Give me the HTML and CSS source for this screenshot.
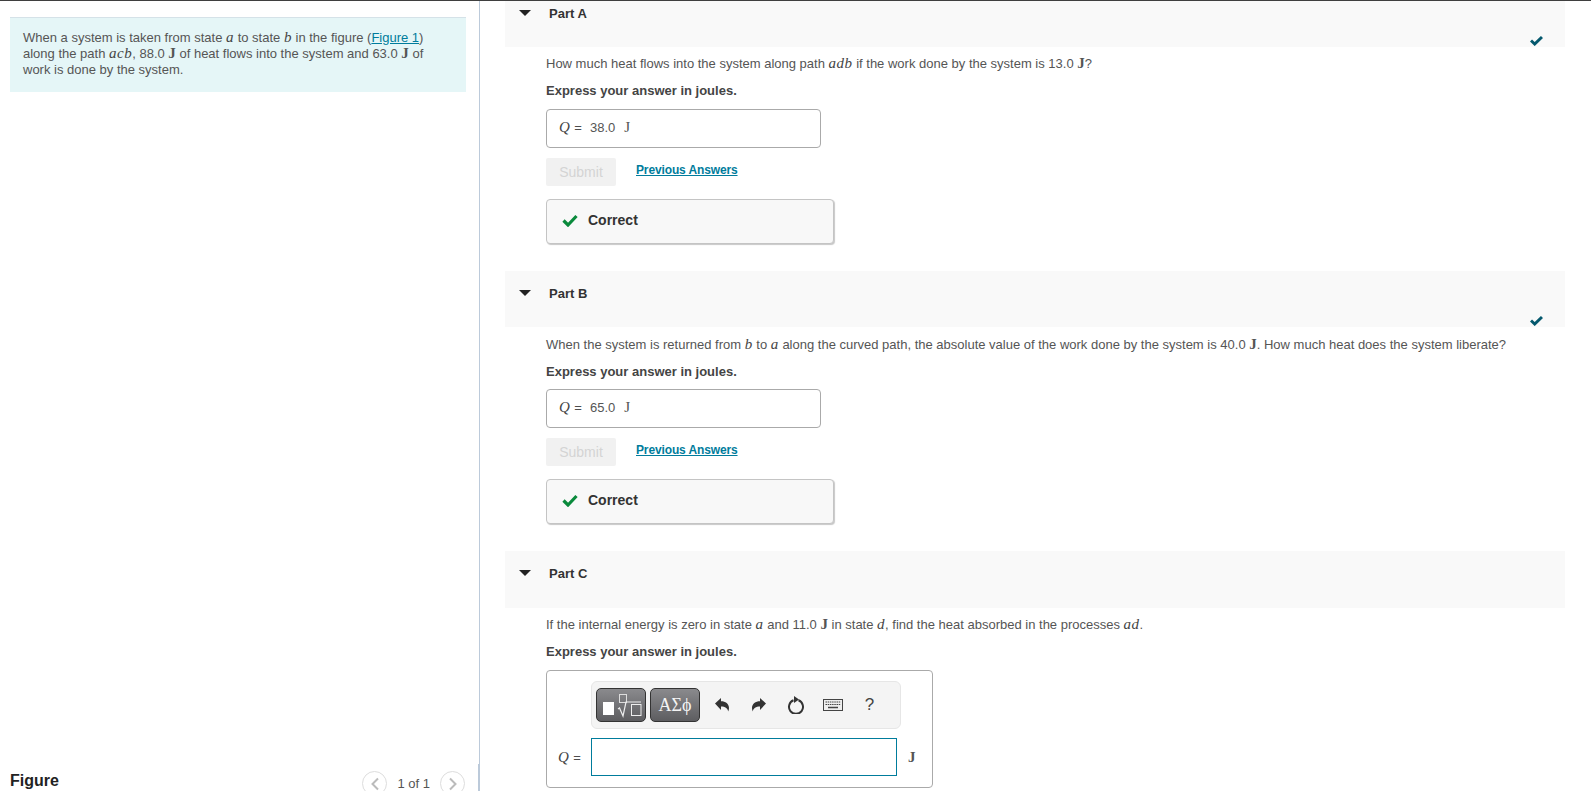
FILE: index.html
```html
<!DOCTYPE html>
<html lang="en">
<head>
<meta charset="utf-8">
<title>Part C</title>
<link rel="stylesheet" href="styles.css">
</head>
<body>
<div class="page">
  <aside class="left">
    <div class="intro">When a system is taken from state <i class="m">a</i> to state <i class="m">b</i> in the figure (<a href="#">Figure 1</a>) along the path <i class="m">acb</i>, 88.0 <span class="u">J</span> of heat flows into the system and 63.0 <span class="u">J</span> of work is done by the system.</div>
    <div class="figbar">
      <strong class="figtitle">Figure</strong>
      <div class="pager">
        <span class="circle"><svg width="10" height="14" viewBox="0 0 10 14"><path d="M8 1.500 2.500 7 8 12.500" fill="none" stroke="#bbb" stroke-width="2"/></svg></span>
        <span class="count">1 of 1</span>
        <span class="circle"><svg width="10" height="14" viewBox="0 0 10 14"><path d="M2 1.500 7.500 7 2 12.500" fill="none" stroke="#bbb" stroke-width="2"/></svg></span>
      </div>
    </div>
  </aside>
  <main class="right">
    <section class="part part-a">
      <header class="head head-a">
        <span class="caret"></span><span class="title">Part A</span>
        <svg class="done" width="13" height="11" viewBox="0 0 13 11"><path d="M1 5.500 4.700 9 12 2" fill="none" stroke="#05596e" stroke-width="3"/></svg>
      </header>
      <div class="body">
        <p class="q">How much heat flows into the system along path <i class="m">adb</i> if the work done by the system is 13.0 <span class="u">J</span>?</p>
        <p class="ex">Express your answer in joules.</p>
        <div class="answer"><i class="m q-var">Q</i><span class="eq">=</span><span class="val">38.0</span><span class="u ans-u">J</span></div>
        <div class="actions"><span class="submit">Submit</span><a class="prev" href="#">Previous Answers</a></div>
        <div class="correct"><svg width="16" height="13" viewBox="0 0 16 13"><path d="M1.500 6.500 6 11 14.500 2" fill="none" stroke="#0a8a3c" stroke-width="3.200"/></svg><span>Correct</span></div>
      </div>
    </section>
    <section class="part part-b">
      <header class="head">
        <span class="caret"></span><span class="title">Part B</span>
        <svg class="done" width="13" height="11" viewBox="0 0 13 11"><path d="M1 5.500 4.700 9 12 2" fill="none" stroke="#05596e" stroke-width="3"/></svg>
      </header>
      <div class="body">
        <p class="q">When the system is returned from <i class="m">b</i> to <i class="m">a</i> along the curved path, the absolute value of the work done by the system is 40.0 <span class="u">J</span>. How much heat does the system liberate?</p>
        <p class="ex">Express your answer in joules.</p>
        <div class="answer"><i class="m q-var">Q</i><span class="eq">=</span><span class="val">65.0</span><span class="u ans-u">J</span></div>
        <div class="actions"><span class="submit">Submit</span><a class="prev" href="#">Previous Answers</a></div>
        <div class="correct"><svg width="16" height="13" viewBox="0 0 16 13"><path d="M1.500 6.500 6 11 14.500 2" fill="none" stroke="#0a8a3c" stroke-width="3.200"/></svg><span>Correct</span></div>
      </div>
    </section>
    <section class="part part-c">
      <header class="head">
        <span class="caret"></span><span class="title">Part C</span>
      </header>
      <div class="body">
        <p class="q">If the internal energy is zero in state <i class="m">a</i> and 11.0 <span class="u">J</span> in state <i class="m">d</i>, find the heat absorbed in the processes <i class="m">ad</i>.</p>
        <p class="ex">Express your answer in joules.</p>
        <div class="editor">
          <div class="toolbar">
            <span class="tbtn">
              <svg width="48" height="32" viewBox="0 0 48 32"><rect x="6" y="13" width="11" height="13" fill="#fff"/><rect x="22.500" y="5.500" width="7" height="8" fill="none" stroke="#ddd"/><path d="M21 20l1.500-1 3.500 8 3-14h15" fill="none" stroke="#eee" stroke-width="1.200"/><rect x="34.500" y="15.500" width="9.500" height="11" fill="none" stroke="#eee"/></svg>
            </span>
            <span class="tbtn greek">ΑΣϕ</span>
            <span class="tool first"><svg width="16" height="16" viewBox="0 0 16 16"><path d="M1 6.500 7 1v3.200c4.500 0 8 2.700 8 6.800 0 1.200-.3 2.300-.8 3.500-.6-3.500-3-5-7.200-5V13z" fill="#333"/></svg></span>
            <span class="tool"><svg width="16" height="16" viewBox="0 0 16 16"><path d="M15 6.500 9 1v3.200C4.500 4.200 1 6.900 1 11c0 1.200.3 2.300.8 3.500.6-3.500 3-5 7.200-5V13z" fill="#333"/></svg></span>
            <span class="tool"><svg width="18" height="18" viewBox="0 0 18 18"><path d="M11.500 4.300A7 7 0 1 1 6.500 4.300" fill="none" stroke="#333" stroke-width="2"/><path d="M7 0v7l5-3.500z" fill="#333"/></svg></span>
            <span class="tool"><svg width="20" height="12" viewBox="0 0 20 12"><rect x=".5" y=".5" width="19" height="11" fill="#eee" stroke="#444"/><path d="M2.500 3h15M2.500 5.500h15" stroke="#444" stroke-dasharray="1.500 .7"/><path d="M5 8.500h10" stroke="#444" stroke-width="1.500"/></svg></span>
            <span class="tool help">?</span>
          </div>
          <div class="inputrow">
            <span class="lbl"><i class="m q-var">Q</i><span class="eq">=</span></span>
            <span class="field"></span>
            <span class="u unit">J</span>
          </div>
        </div>
      </div>
    </section>
  </main>
</div>
</body>
</html>
```

FILE: styles.css
```css
* { box-sizing: border-box; }
html, body { margin: 0; height: 791px; overflow: hidden; background: #fff; }
body { font-family: "Liberation Sans", Arial, sans-serif; font-size: 13px; color: #4d4d4d; }
.page { display: flex; height: 791px; border-top: 1px solid #3f3f3f; overflow: hidden; }
.left { flex: 0 0 480px; height: 790px; border-right: 1px solid #bccada; display: flex; flex-direction: column; justify-content: space-between; padding: 16px 0 0 10px; }
.intro { width: 456px; height: 75px; background: #e5f6f7; border-top: 1px solid #d5e2e8; padding: 12px 30px 0 13px; line-height: 16px; color: #555; }
.intro a, .prev { color: #007c9c; text-decoration: underline; }
.m { font-family: "Liberation Serif", serif; font-style: italic; font-size: 15px; line-height: 1; letter-spacing: .5px; color: #444; }
.u { font-family: "Liberation Serif", serif; font-weight: bold; font-size: 15px; line-height: 1; color: #555; }
.figbar { display: flex; align-items: flex-start; justify-content: space-between; height: 27px; margin-right: -1px; border-right: 2px solid #bccada; padding-right: 13px; overflow: hidden; }
.figtitle { font-size: 16px; color: #222; margin-top: 8px; }
.pager { display: flex; align-items: center; gap: 10px; padding-top: 7px; color: #555; font-size: 13px; }
.circle { width: 25px; height: 25px; border: 1px solid #ddd; border-radius: 50%; display: flex; align-items: center; justify-content: center; }
.right { flex: 1; padding-left: 25px; padding-right: 26px; }
.head { height: 56px; background: #f9f9f9; display: flex; padding: 15px 22px 0 11px; }
.head-a { height: 46px; padding-top: 5px; }
.part-c .head { height: 57px; }
.caret { width: 0; height: 0; border: 6px solid transparent; border-top: 6px solid #222; border-bottom: 0; margin: 4px 18px 0 3px; }
.title { font-size: 13px; font-weight: bold; color: #333; line-height: 16px; }
.done { margin-left: auto; align-self: flex-end; margin-bottom: 1px; }
.body { padding: 8px 0 0 41px; height: 224px; }
.part-b .body { padding-top: 9px; }
.q { margin: 0; height: 17px; line-height: 17px; color: #555; white-space: nowrap; }
.ex { margin: 10px 0 0; height: 17px; line-height: 17px; font-weight: bold; font-size: 13px; color: #444; }
.answer { width: 275px; height: 39px; margin-top: 10px; border: 1px solid #aaa; border-radius: 4px; display: flex; align-items: center; padding: 0 0 3px 12px; }
.part-b .answer { margin-top: 9px; }
.eq { margin-left: 4px; }
.val { margin-left: 8px; color: #555; }
.ans-u { margin-left: 9px; font-weight: normal; }
.actions { display: flex; align-items: flex-start; margin-top: 10px; height: 28px; }
.submit { width: 70px; height: 28px; background: #f1f1f1; border-radius: 2px; color: #d4d4d4; display: flex; align-items: center; justify-content: center; font-size: 14px; }
.prev { margin-left: 20px; margin-top: 5px; font-weight: bold; font-size: 12px; letter-spacing: -.13px; }
.correct { width: 288px; height: 45px; margin-top: 13px; border: 1px solid #c4c4c4; border-radius: 4px; background: #f8f8f8; box-shadow: 1px 1px 1px #c8c8c8; display: flex; align-items: center; gap: 10px; padding: 0 0 3px 15px; font-weight: bold; font-size: 14px; color: #333; }
.editor { width: 387px; height: 118px; margin-top: 10px; border: 1px solid #aaa; border-radius: 4px; padding: 10px 12px 0 11px; }
.toolbar { width: 310px; height: 48px; margin-left: 33px; background: #f4f4f4; border: 1px solid #e6e6e6; border-radius: 6px; display: flex; align-items: center; padding-left: 4px; gap: 4px; }
.tbtn { width: 50px; height: 34px; border: 1px solid #333; border-radius: 5px; background: linear-gradient(#8a8a8d, #5d5d60); display: flex; align-items: center; justify-content: center; }
.greek { font-family: "Liberation Serif", serif; font-size: 18px; color: #f4f4f4; }
.tool { width: 33px; display: flex; justify-content: center; align-items: center; color: #444; }
.first { margin-left: 1px; }
.help { font-size: 17px; }
.inputrow { display: flex; align-items: center; margin-top: 9px; }
.lbl { width: 33px; white-space: nowrap; }
.field { width: 306px; height: 38px; border: 1px solid #007c9c; }
.unit { margin-left: 11px; }
```
